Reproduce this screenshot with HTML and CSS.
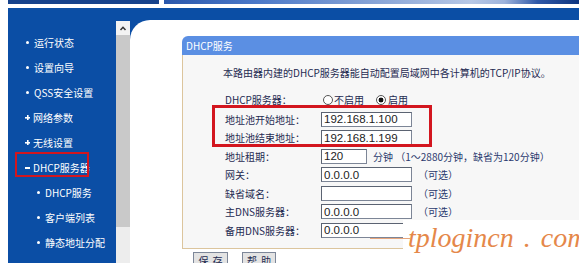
FILE: index.html
```html
<!DOCTYPE html>
<html lang="zh-CN">
<head>
<meta charset="utf-8">
<title>DHCP服务</title>
<link rel="stylesheet" href="styles.css">
</head>
<body>
<div class="page">
  <header class="top">
    <div class="top-left"></div>
    <div class="top-banner"></div>
  </header>
  <div class="frame">
    <nav class="menu">
      <ul>
        <li class="item dot">运行状态</li>
        <li class="item dot">设置向导</li>
        <li class="item dot">QSS安全设置</li>
        <li class="item plus">网络参数</li>
        <li class="item plus">无线设置</li>
        <li class="item minus">DHCP服务器</li>
        <li class="sub">DHCP服务</li>
        <li class="sub">客户端列表</li>
        <li class="sub">静态地址分配</li>
        <li class="item plus">转发规则</li>
      </ul>
      <div class="mark mark-menu"></div>
    </nav>
    <div class="scrollbar">
      <div class="sb-up">
        <svg width="14" height="14" viewBox="0 0 14 14"><polyline points="4.5,9 7,6.3 9.5,9" fill="none" stroke="#333" stroke-width="1.5"/></svg>
      </div>
      <div class="sb-thumb"></div>
      <div class="sb-track"></div>
    </div>
    <main class="content">
      <section class="panel">
        <h2 class="panel-title">DHCP服务</h2>
        <div class="panel-body">
          <p class="desc">本路由器内建的DHCP服务器能自动配置局域网中各计算机的TCP/IP协议。</p>
          <div class="form">
            <div class="row first">
              <label>DHCP服务器：</label>
              <div class="field">
                <input type="radio" name="dhcp" class="radio"><span class="rlabel">不启用</span>
                <input type="radio" name="dhcp" class="radio on" checked><span class="rlabel">启用</span>
              </div>
            </div>
            <div class="row">
              <label>地址池开始地址：</label>
              <div class="field"><input class="text" type="text" value="192.168.1.100"></div>
            </div>
            <div class="row">
              <label>地址池结束地址：</label>
              <div class="field"><input class="text" type="text" value="192.168.1.199"></div>
            </div>
            <div class="row">
              <label>地址租期：</label>
              <div class="field"><input class="text short" type="text" value="120"><span class="hint unit">分钟 （1～2880分钟，缺省为120分钟）</span></div>
            </div>
            <div class="row">
              <label>网关：</label>
              <div class="field"><input class="text" type="text" value="0.0.0.0"><span class="hint">（可选）</span></div>
            </div>
            <div class="row">
              <label>缺省域名：</label>
              <div class="field"><input class="text" type="text" value=""><span class="hint">（可选）</span></div>
            </div>
            <div class="row">
              <label>主DNS服务器：</label>
              <div class="field"><input class="text" type="text" value="0.0.0.0"><span class="hint">（可选）</span></div>
            </div>
            <div class="row">
              <label>备用DNS服务器：</label>
              <div class="field"><input class="text" type="text" value="0.0.0.0"></div>
            </div>
          </div>
        </div>
        <div class="buttons">
          <button class="btn">保存</button>
          <button class="btn">帮助</button>
        </div>
        <div class="mark mark-form"></div>
      </section>
    </main>
  </div>
  <div class="watermark">tplogincn . com</div>
</div>
</body>
</html>
```

FILE: styles.css
```css
* {
  box-sizing: border-box;
  margin: 0;
  padding: 0;
}

html,
body {
  width: 579px;
  height: 263px;
  overflow: hidden;
  background: #fff;
}

body {
  font-family: "Noto Sans CJK SC", sans-serif;
  font-size: 10px;
  color: #1f2b52;
}

.page {
  position: relative;
  width: 579px;
  height: 263px;
  padding-left: 8px;
  overflow: hidden;
}

/* top header strip */
.top {
  display: flex;
  gap: 5px;
  height: 4px;
}

.top-left {
  width: 151px;
  background: #16428c;
}

.top-banner {
  flex: 1;
  background: linear-gradient(90deg, #2a57ab 0%, #4a78c8 22%, #86a3d6 50%, #b7c8e6 74%, #9fb4dc 82%, #2e58a8 90%, #0d3580 100%);
}

/* main frame */
.frame {
  display: flex;
  height: 255px;
  margin-top: 4px;
  background: #0b4ea5;
}

/* left menu */
.menu {
  position: relative;
  width: 108px;
  padding-top: 22px;
  color: #fff;
}

.menu ul {
  list-style: none;
}

.menu li {
  display: flex;
  align-items: center;
  height: 25px;
  white-space: nowrap;
}

.item {
  padding-left: 17px;
}

.sub {
  padding-left: 28px;
}

.dot::before,
.sub::before {
  content: "";
  flex: none;
  width: 3px;
  height: 3px;
  margin: 0 5px 0 1px;
  border-radius: 50%;
  background: #fff;
}

.plus::before {
  content: "";
  flex: none;
  width: 5px;
  height: 5px;
  margin-right: 3px;
  background:
    linear-gradient(#fff, #fff) center / 5px 1.6px no-repeat,
    linear-gradient(#fff, #fff) center / 1.6px 5px no-repeat;
}

.minus::before {
  content: "";
  flex: none;
  width: 5px;
  height: 2px;
  margin-right: 3px;
  background: #fff;
}

.mark {
  position: absolute;
  border: 2px solid #d3161f;
}

.mark-menu {
  left: 7px;
  top: 144px;
  width: 74px;
  height: 25px;
}

/* fake scrollbar of the menu frame */
.scrollbar {
  display: flex;
  flex-direction: column;
  width: 14px;
  margin-top: 13px;
}

.sb-up {
  display: flex;
  align-items: center;
  justify-content: center;
  height: 14px;
  background: #f3f3f3;
}

.sb-thumb {
  height: 192px;
  background: #c9c9c9;
}

.sb-track {
  flex: 1;
  background: #ededed;
}

/* content */
.content {
  flex: 1;
  margin-top: 12px;
  padding: 16px 0 0 52px;
  background: #fff;
  border-top-left-radius: 20px;
  overflow: hidden;
}

.panel {
  position: relative;
  width: 420px;
}

.panel-title {
  height: 19px;
  padding-left: 4px;
  font-size: 10px;
  font-weight: normal;
  line-height: 19px;
  color: #fff;
  background: #5b8fe3;
  border-top-left-radius: 6px;
}

.panel-body {
  padding: 9px 0 8px;
  background: #f7f7f7;
  border-left: 1px solid #dcc59d;
  border-bottom: 1px solid #dcc59d;
}

.desc {
  padding-left: 40px;
  margin-bottom: 7px;
  line-height: 18px;
  white-space: nowrap;
}

.form {
  padding-left: 42px;
}

.row {
  display: grid;
  grid-template-columns: 96px auto;
  align-items: center;
  height: 18.5px;
}

.row.first {
  height: 21px;
}

.row label {
  white-space: nowrap;
}

.field {
  display: flex;
  align-items: center;
  white-space: nowrap;
}

.radio {
  appearance: none;
  -webkit-appearance: none;
  flex: none;
  width: 10px;
  height: 10px;
  margin-left: 2px;
  border: 1px solid #555;
  border-radius: 50%;
  background: #fff;
}

.radio.on {
  margin-left: 12px;
  background: radial-gradient(circle, #111 0 2.2px, #fff 2.7px);
}

.rlabel {
  margin-left: 1px;
}

.radio.on + .rlabel {
  margin-left: 2px;
}

.text {
  width: 91px;
  height: 15px;
  padding: 0 2px;
  font-family: "Liberation Sans", Arial, sans-serif;
  font-size: 11.5px;
  color: #222;
  background: #fff;
  border: 1px solid #7c8596;
  border-top-color: #5b6372;
  border-left-color: #5b6372;
  outline: none;
}

.text.short {
  width: 46px;
}

.hint {
  margin-left: 6px;
  color: #2b3a6e;
}

.hint.unit {
  margin-left: 6px;
}

.buttons {
  display: flex;
  gap: 14px;
  padding: 3px 0 0 11px;
}

.btn {
  height: 18px;
  padding: 0 0 0 4px;
  font-family: "Noto Sans CJK SC", sans-serif;
  font-size: 10px;
  letter-spacing: 4px;
  color: #1f2b52;
  background: #e3e3e3;
  border: 1px solid #7d8799;
}

.btn:first-child {
  width: 35px;
}

.btn:last-child {
  width: 34px;
}

.mark-form {
  left: 30px;
  top: 69px;
  width: 220px;
  height: 42px;
  border-width: 3px;
}

/* site watermark laid over the screenshot */
.watermark {
  position: absolute;
  left: 403px;
  top: 220px;
  right: 0;
  bottom: 0;
  padding: 4px 0 0 5px;
  font-family: "Liberation Serif", serif;
  font-size: 28px;
  font-style: italic;
  line-height: 28px;
  word-spacing: 3px;
  color: #e5884a;
  background: #fff;
  white-space: nowrap;
}

.watermark::before {
  content: "";
  position: absolute;
  left: -33px;
  top: 18px;
  width: 40px;
  height: 1px;
  background: #e6a57c;
}
```
